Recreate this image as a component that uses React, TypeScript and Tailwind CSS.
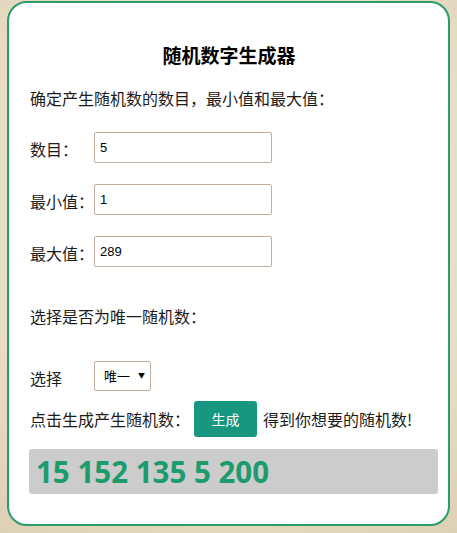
import React from "react";

export default function App() {
  const cjk = { fontFamily: '"Noto Sans CJK SC", "Noto Sans", sans-serif' };
  return (
    <div
      className="w-[457px] h-[533px] overflow-hidden bg-[#e8dcc6] bg-[radial-gradient(circle_at_50%_40%,#f1ead9_0%,#e7dbc3_70%,#ddd0b5_100%)] pt-[1px] pl-[7px]"
      style={cjk}
    >
      <div className="w-[443px] h-[525px] bg-white border-2 border-[#2b9c6c] rounded-[20px] pl-5 pr-[10px] pt-[40px] text-[#1c1c1c]">
        <h1 className="text-[19px] leading-[24px] font-bold text-center pr-[9px] text-black">随机数字生成器</h1>
        <p className="mt-[19px] text-[16px] leading-[24px] pl-[1px]">确定产生随机数的数目，最小值和最大值：</p>

        <div className="mt-[22px] flex flex-col gap-[21px]">
          {[
            ["数目：", "5"],
            ["最小值：", "1"],
            ["最大值：", "289"],
          ].map(([label, val]) => (
            <div key={label} className="flex items-center h-[31px]">
              <span className="w-[65px] pl-[1px] text-[16px] leading-[24px] mt-[2px]">{label}</span>
              <div
                className="w-[178px] h-[31px] border border-[#bfaea2] rounded-[2px] flex items-center pl-[5px] text-[13px] text-black"
                style={{ fontFamily: '"Liberation Sans", Arial, sans-serif' }}
              >
                {val}
              </div>
            </div>
          ))}
        </div>

        <p className="mt-[37px] text-[16px] leading-[24px] pl-[1px]">选择是否为唯一随机数：</p>

        <div className="mt-[33px] flex items-center h-[30px]">
          <span className="w-[65px] pl-[1px] text-[16px] leading-[24px] mt-[3px]">选择</span>
          <div className="w-[57px] h-[30px] border border-[#bfaea2] rounded-[2px] flex items-center pl-[9px] text-[13px] text-black relative">
            <span>唯一</span>
            <span className="absolute right-[5px] top-[8px] text-[7px] leading-[10px]">▼</span>
          </div>
        </div>

        <div className="mt-[10px] flex items-center h-[36px]">
          <span className="text-[16px] leading-[24px] pl-[1px] w-[165px]">点击生成产生随机数：</span>
          <div className="w-[63px] h-[36px] bg-[#17977f] rounded-[3px] text-white text-[14px] flex items-center justify-center">生成</div>
          <span className="ml-[6px] text-[16px] leading-[24px]">得到你想要的随机数!</span>
        </div>

        <div className="mt-[12px] w-[409px] h-[45px] bg-[#cccccc] rounded-[3px] flex items-center pl-[7px]">
          <span
            className="text-[29.5px] font-bold text-[#1c9c6c] leading-none"
            style={{ fontFamily: '"Open Sans", "Noto Sans", sans-serif' }}
          >
            15 152 135 5 200
          </span>
        </div>
      </div>
    </div>
  );
}
